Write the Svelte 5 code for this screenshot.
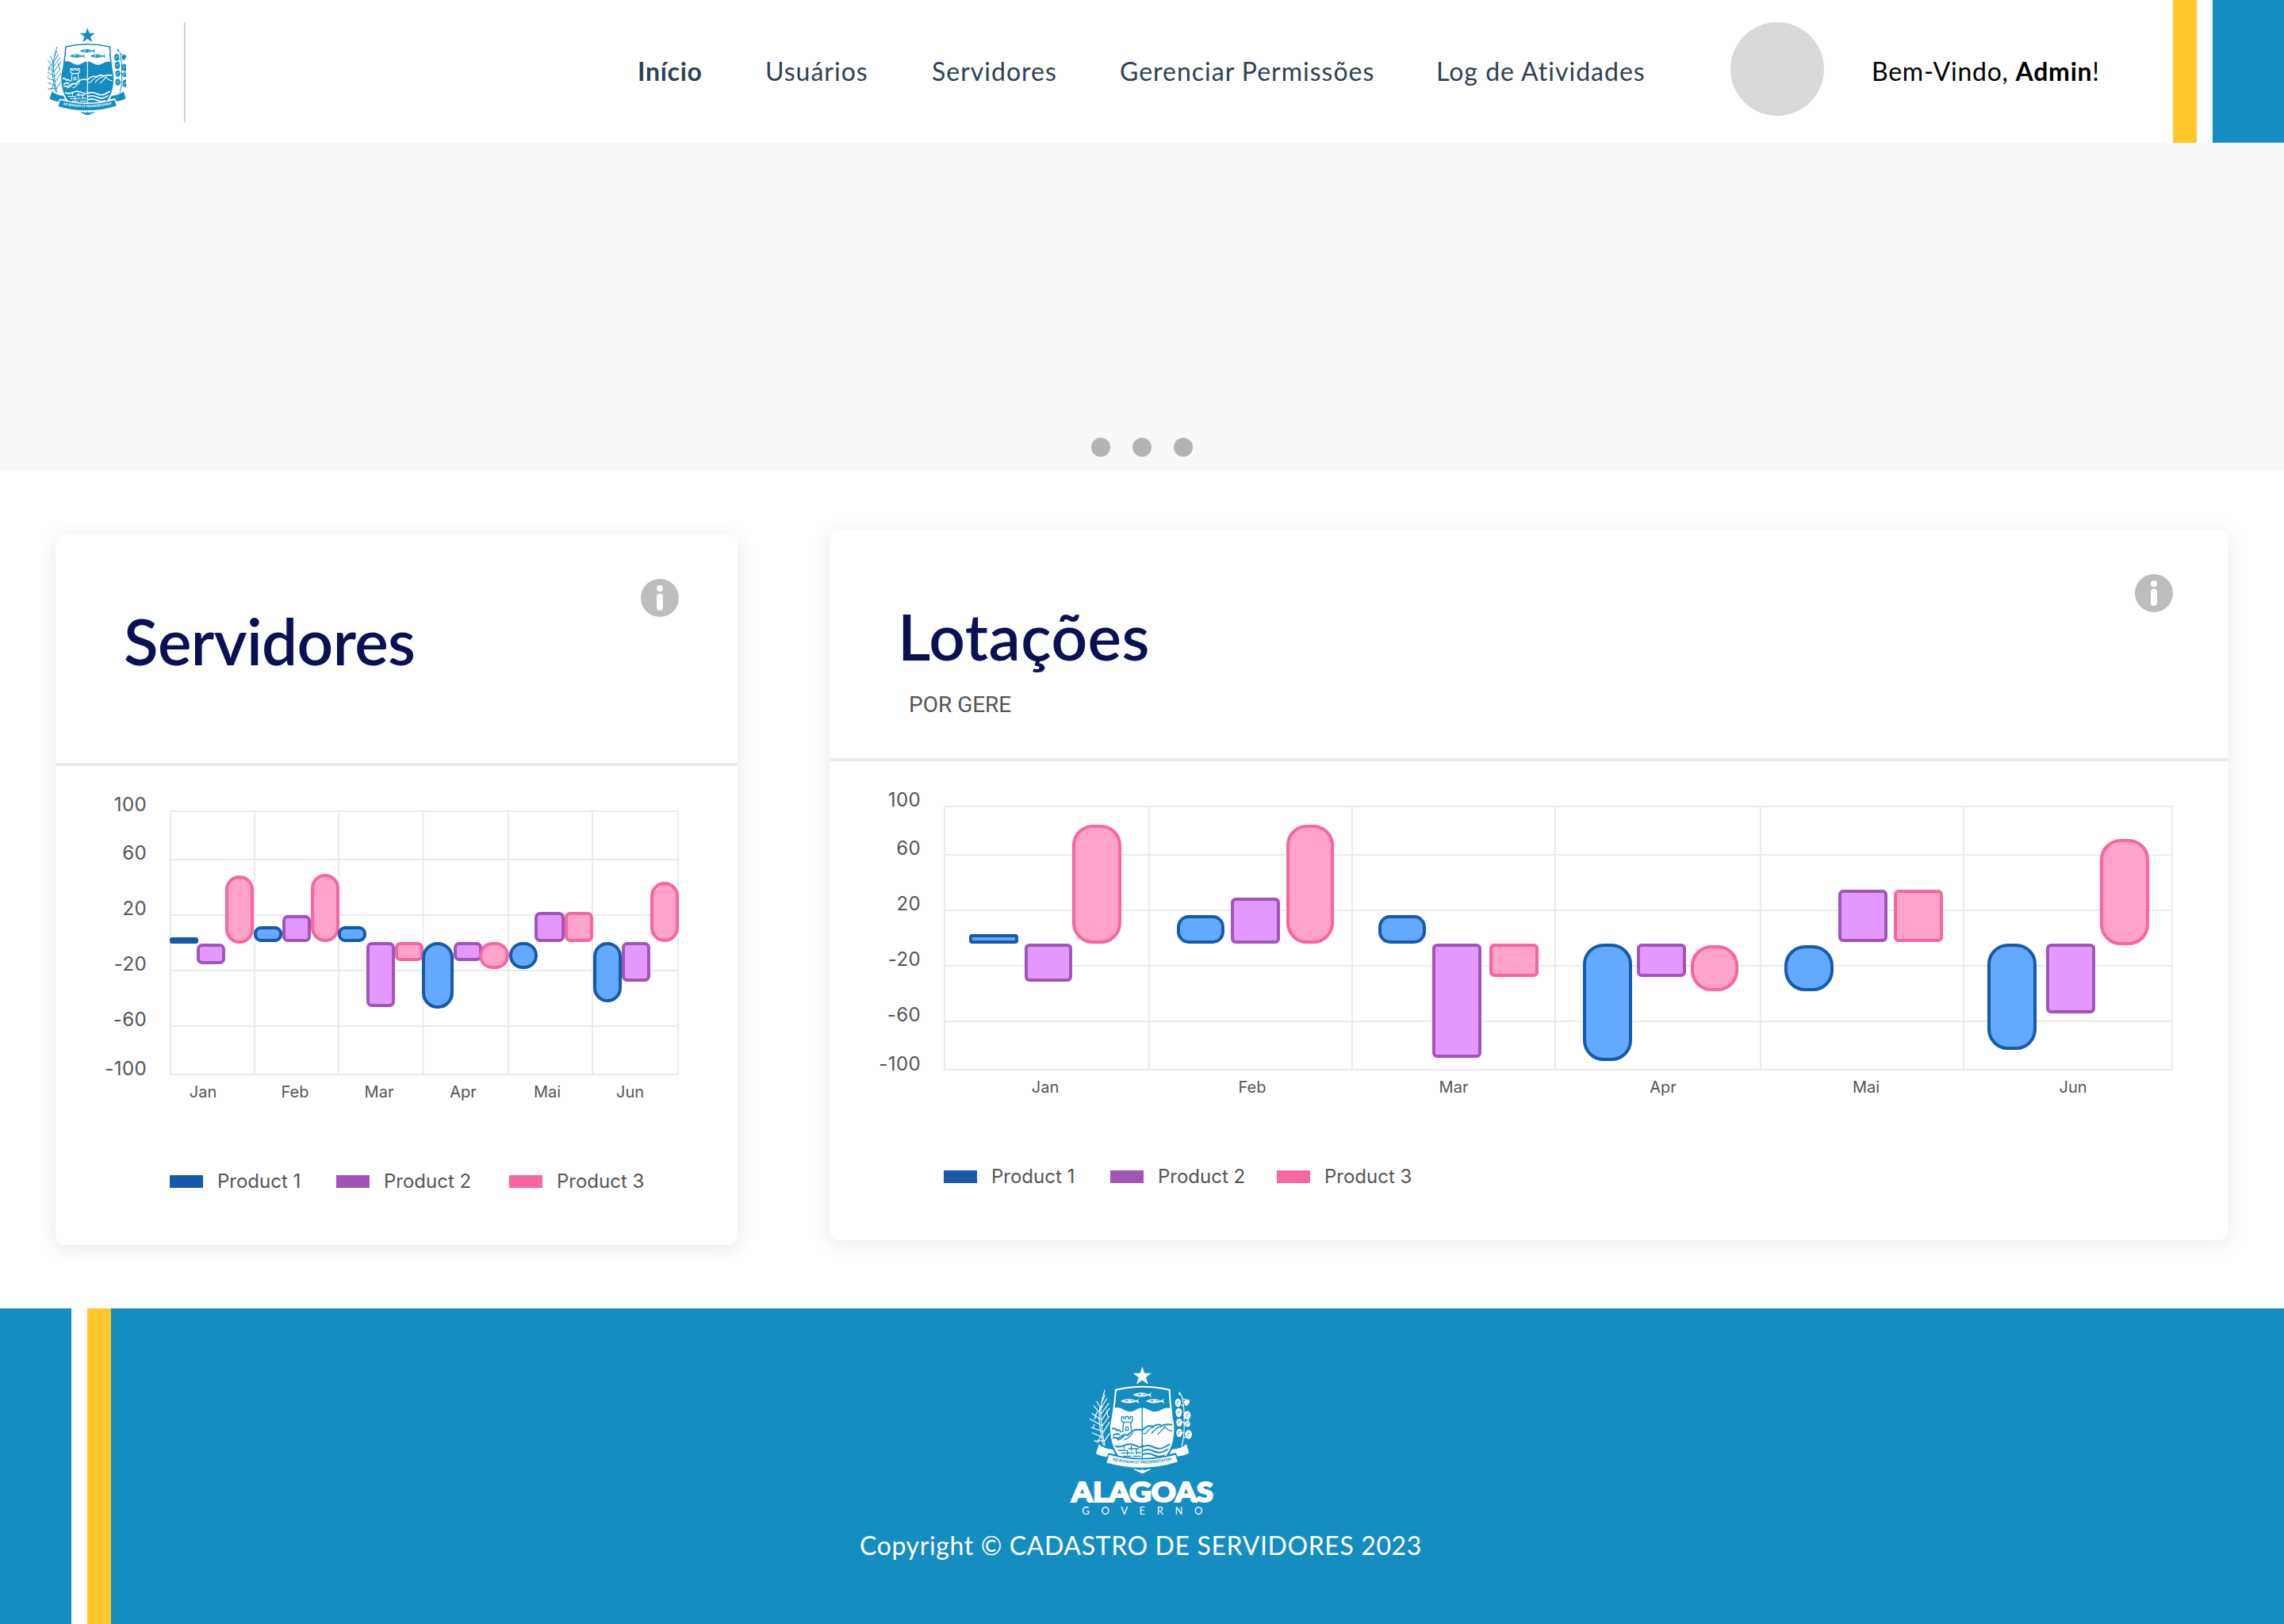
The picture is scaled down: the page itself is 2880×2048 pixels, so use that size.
<script>
  const links = ['Início', 'Usuários', 'Servidores', 'Gerenciar Permissões', 'Log de Atividades'];
  const legend = ['Product 1', 'Product 2', 'Product 3'];

  // Grid rows shared by both charts: [line offset, axis label]
  const rows = [
    [57, '100'],
    [118, '60'],
    [188, '20'],
    [258, '-20'],
    [328, '-60'],
    [389, '-100']
  ];

  // bars: [series, x, y, width, height, radius]
  const cards = [
    {
      id: 'servidores',
      title: 'Servidores',
      subtitle: '',
      width: 860,
      columns: [145, 251, 357, 463.5, 571, 677, 785],
      months: [['Jan', 186], ['Feb', 302], ['Mar', 408], ['Apr', 514], ['Mai', 620], ['Jun', 724.5]],
      bars: [
        [1, 144, 216, 36, 8, 3], [2, 178, 224, 36, 26, 7], [3, 214, 138, 36, 86, 18],
        [1, 250, 202, 36, 20, 9], [2, 286, 188, 36, 34, 7], [3, 322, 136, 36, 86, 18],
        [1, 356, 202, 36, 20, 9], [2, 392, 222, 36, 82, 7], [3, 428, 222, 36, 24, 7],
        [1, 462, 222, 40, 84, 20], [2, 502, 222, 36, 24, 7], [3, 534, 222, 38, 34, 17],
        [1, 572, 222, 36, 34, 17], [2, 604, 184, 38, 38, 7], [3, 642, 184, 36, 38, 7],
        [1, 678, 222, 36, 76, 18], [2, 714, 222, 36, 50, 7], [3, 750, 146, 36, 76, 18]
      ]
    },
    {
      id: 'lotacoes',
      title: 'Lotações',
      subtitle: 'POR GERE',
      width: 1764,
      columns: [145, 403, 659, 915, 1174, 1430, 1693],
      months: [['Jan', 272], ['Feb', 533], ['Mar', 787], ['Apr', 1051], ['Mai', 1307], ['Jun', 1568]],
      bars: [
        [1, 176, 218, 62, 12, 4], [2, 246, 230, 60, 48, 6], [3, 306, 80, 62, 150, 26],
        [1, 438, 194, 60, 36, 15], [2, 506, 172, 62, 58, 6], [3, 576, 80, 60, 150, 26],
        [1, 692, 194, 60, 36, 15], [2, 760, 230, 62, 144, 6], [3, 832, 230, 62, 42, 6],
        [1, 950, 230, 62, 148, 26], [2, 1018, 230, 62, 42, 6], [3, 1086, 232, 60, 58, 26],
        [1, 1204, 232, 62, 58, 26], [2, 1272, 162, 62, 66, 6], [3, 1342, 162, 62, 66, 6],
        [1, 1460, 230, 62, 134, 26], [2, 1534, 230, 62, 88, 6], [3, 1602, 98, 62, 134, 26]
      ]
    }
  ];
</script>

{#snippet crest(key)}
  <defs>
    <clipPath id="shield-{key}">
      <path d="M231 128 Q331 104 434 128 Q438 210 448 262 Q452 345 405 392 Q372 425 331 441 Q290 425 257 392 Q210 345 213 262 Q224 210 231 128Z" />
    </clipPath>
    <path id="motto-{key}" d="M218 395 Q331 421 446 393" />
  </defs>
  <polygon class="ink" points="331,40 339.500,65 366,65 345,81 353,107 331,91.500 309,107 317,81 296,65 322.500,65" />
  <g clip-path="url(#shield-{key})">
    <path class="ink" d="M205 203 Q240 187 262 204 Q286 218 306 204 Q331 188 356 204 Q380 218 402 204 Q424 190 455 203 V450 H205Z" />
    <!-- tower -->
    <path class="cut-line" d="M253 229 V245 L260 251 L257 288 M294 229 V245 L287 251 L290 283 M253 229 H260 V236 H268 V229 H278 V236 H286 V229 H294 M259 251 H288" />
    <path class="cut-line" d="M268 281 V271 Q273 265 278 271 V281Z" />
    <!-- hills and crests -->
    <path class="cut-line bold" d="M208 278 Q226 268 235 282 Q244 276 251 289 M220 302 Q232 290 246 298 M208 312 Q230 306 240 313 Q262 292 276 300 Q300 270 331 281 Q352 258 372 267 Q392 254 405 264 Q422 254 452 262" />
    <path class="cut-line" d="M264 300 Q250 318 236 318 M334 293 H345 Q362 268 374 270 M366 294 Q384 268 404 267 M388 297 Q408 280 416 267 Q424 282 450 286 M262 318 Q280 312 296 290" />
    <!-- lagoon pattern -->
    <path class="cut-line bold" d="M205 326 Q232 352 258 340 T308 340 T331 334" />
    <path class="cut-line" d="M240 357 H272 M278 351 H318 M250 367 H300 M306 366 H326 M260 379 H290 M296 379 H326 M262 340 V352 M290 340 V358 M275 357 V374 M308 352 V372" />
    <path class="cut-line bold" d="M331 344 Q352 334 374 345 T414 345 T456 330 M331 359 Q352 349 374 360 T414 360 T450 348 M331 374 Q352 364 374 375 T420 374" />
    <path class="cut-line" d="M331 192 V445" />
  </g>
  <path class="ink-line shield" d="M231 128 Q331 104 434 128 Q438 210 448 262 Q452 345 405 392 Q372 425 331 441 Q290 425 257 392 Q210 345 213 262 Q224 210 231 128Z" />
  <path class="cut" d="M250 400 Q331 442 412 400 L400 424 Q331 440 262 424Z" />
  <path class="ink-line" d="M300 428 Q316 434 331 442 Q346 434 362 428 M331 426 V440" />
  <!-- fish -->
  {#each [[331, 146], [284, 170], [379, 170]] as [x, y]}
    <g transform="translate({x} {y})">
      <path class="ink" d="M-36 1 Q-18 -10 8 -6 L24 -1 L35 -8 L31 0 L36 10 L24 3 Q0 12 -22 6Z" />
      <path class="cut-line thin" d="M-20 0 H-4 M2 0 H16 M-14 4 L-8 -5" />
    </g>
  {/each}
  <!-- sugar cane -->
  <path class="ink-line plant" d="M190 128 Q168 190 176 250 Q180 300 190 340 M184 338 Q160 240 172 190 M170 215 L147 188 M172 205 L197 160 M173 222 L205 178 M172 240 L140 217 M175 245 L208 197 M176 262 L132 238 M177 268 L206 228 M180 285 L137 270 M181 292 L207 250 M183 308 L140 290 M186 320 L148 322 M188 322 L207 292 M172 195 L158 170 M176 180 L190 146 M160 210 L150 240 M196 206 L202 232 M150 258 L144 276 M176 300 L160 330" />
  <!-- cotton branch -->
  <path class="ink-line plant" d="M470 136 L481 152 Q492 200 489 250 Q492 300 480 342 M486 190 L470 178 M488 215 L505 222 M489 250 L470 252 M489 260 L508 240 M490 290 L470 292 M489 310 L508 298 M484 162 L508 168 L498 188" />
  {#each [[466, 177, 11, 16], [469, 214, 12, 17], [501, 224, 13, 16], [471, 252, 11, 15], [502, 257, 10, 11], [471, 291, 11, 16], [506, 297, 13, 17]] as [x, y, rx, ry]}
    <ellipse class="ink" cx={x} cy={y} {rx} {ry} />
    <path class="cut-line thin" d="M{x - 5} {y + 6} Q{x - 2} {y - 8} {x + 5} {y - 5}" />
  {/each}
  <path class="ink" d="M488 170 L504 166 L511 174 L500 190 L492 186Z M472 138 L478 150 L468 146Z" />
  <!-- ribbon -->
  <path class="ink" d="M167 334 Q186 352 220 354 L228 372 L204 368 L199 382 Q174 380 156 369Z M498 334 Q478 352 442 354 L434 372 L458 366 L463 380 Q490 378 508 367Z" />
  <path class="ink outlined" d="M204 371 Q331 407 458 371 L468 402 Q331 446 193 405Z" />
  <text class="motto"><textPath href="#motto-{key}" textLength="226">AD BONUM ET PROSPERITATEM</textPath></text>
{/snippet}

<div class="page">
  <header class="topbar">
    <svg class="crest" viewBox="147 40 362 403" aria-label="Alagoas">{@render crest('top')}</svg>
    <span class="rule"></span>
    <nav>
      {#each links as link, i}
        <a class:active={i === 0}>{link}</a>
      {/each}
    </nav>
    <span class="avatar"></span>
    <p class="welcome">Bem-Vindo, <b>Admin</b>!</p>
    <span class="stripe yellow"></span>
    <span class="stripe blue"></span>
  </header>

  <section class="banner">
    <i></i><i></i><i></i>
  </section>

  <main>
    {#each cards as card}
      <article class="card {card.id}">
        <div class="card-head">
          <div>
            <h2>{card.title}</h2>
            {#if card.subtitle}<p>{card.subtitle}</p>{/if}
          </div>
          <svg class="info" viewBox="0 0 48 48">
            <circle cx="24" cy="24" r="24" fill="#bdbdbd" />
            <circle cx="24" cy="12" r="4" fill="#fff" />
            <rect x="20" y="18.500" width="8" height="21.500" rx="4" fill="#fff" />
          </svg>
        </div>
        <svg class="chart" width={card.width} height="504">
          {#each rows as [y, label]}
            <line x1={card.columns[0] - 1} x2={card.columns[6] + 1} y1={y} y2={y} />
            <text class="tick" x="115" y={label === '-100' ? y + 1 : y - 0.5}>{label}</text>
          {/each}
          {#each card.columns as x}
            <line x1={x} x2={x} y1="56" y2="390" />
          {/each}
          {#each card.bars as [series, x, y, w, h, r]}
            <rect class="s{series}" x={x + 2} y={y + 2} width={w - 4} height={h - 4} rx={Math.max(r - 2, 1)} />
          {/each}
          {#each card.months as [month, x]}
            <text class="month" {x} y="418">{month}</text>
          {/each}
        </svg>
        <ul class="legend">
          {#each legend as name, i}
            <li><span class="swatch c{i + 1}"></span><span class="name">{name}</span></li>
          {/each}
        </ul>
      </article>
    {/each}
  </main>

  <footer>
    <span class="stripe blue"></span>
    <span class="stripe yellow"></span>
    <div class="foot">
      <svg class="brand" viewBox="0 0 660 630" aria-label="Alagoas Governo">
        {@render crest('foot')}
        <text class="alagoas" x="63" y="553" textLength="537" lengthAdjust="spacingAndGlyphs">ALAGOAS</text>
        <text class="governo" x="103" y="599" textLength="456">GOVERNO</text>
      </svg>
      <p>Copyright © CADASTRO DE SERVIDORES 2023</p>
    </div>
  </footer>
</div>

<style>
  :global(body) {
    margin: 0;
    background: #fff;
  }
  .page {
    width: 2880px;
    height: 2048px;
    display: flex;
    flex-direction: column;
    overflow: hidden;
    font-family: Lato, 'Open Sans', sans-serif;
    --blue: #148dc1;
    --yellow: #ffc72c;
  }
  p, h2, ul {
    margin: 0;
    padding: 0;
  }

  .topbar {
    flex: none;
    height: 180px;
    display: flex;
    align-items: center;
    font-size: 32px;
    line-height: 38.4px;
    white-space: nowrap;
  }
  .topbar .crest {
    width: 99px;
    height: 110px;
    margin-left: 60px;
    --ink: var(--blue);
    --cut: #fff;
  }
  .rule {
    width: 2px;
    height: 126px;
    margin: 2px 0 0 73px;
    background: #cbd5e1;
  }
  nav {
    display: grid;
    grid-template-columns: 161px 210px 237px 399px 370px;
    margin: 1px 0 0 570px;
    color: #2e4159;
    letter-spacing: 1px;
  }
  nav .active {
    font-weight: 700;
    letter-spacing: 0.7px;
  }
  .avatar {
    flex: none;
    width: 118px;
    height: 118px;
    margin: 0 0 6px 1px;
    border-radius: 50%;
    background: #d9d9d9;
  }
  .welcome {
    flex: 1;
    padding: 1px 0 0 60px;
    color: #000;
    letter-spacing: 0.75px;
  }
  .stripe {
    flex: none;
    align-self: stretch;
  }
  .stripe.yellow {
    width: 30px;
    margin-right: 20px;
    background: var(--yellow);
  }
  .stripe.blue {
    width: 90px;
    background: var(--blue);
  }

  .banner {
    flex: none;
    height: 413px;
    box-sizing: border-box;
    padding-bottom: 17px;
    display: flex;
    justify-content: center;
    align-items: flex-end;
    gap: 28px;
    background: #f8f8f8;
  }
  .banner i {
    width: 24px;
    height: 24px;
    border-radius: 50%;
    background: #b4b4b4;
  }

  main {
    flex: none;
    height: 1057px;
    box-sizing: border-box;
    padding: 75px 70px 0;
    display: flex;
    align-items: flex-start;
    justify-content: space-between;
  }
  .card {
    height: 896px;
    border-radius: 12px;
    background: #fff;
    box-shadow: 0 4px 24px rgba(0, 0, 0, 0.09);
  }
  .servidores {
    width: 860px;
    margin-top: 6px;
  }
  .lotacoes {
    width: 1764px;
  }
  .card-head {
    height: 288px;
    box-sizing: content-box;
    border-bottom: 4px solid #ebebeb;
    display: flex;
    justify-content: space-between;
    padding-left: 86px;
    padding-right: 70px;
  }
  .servidores .card-head {
    padding-right: 74px;
  }
  h2 {
    margin-top: 86px;
    font-size: 80px;
    line-height: 96px;
    font-weight: 600;
    letter-spacing: 0.5px;
    color: #0a1054;
  }
  .servidores h2 {
    letter-spacing: -0.6px;
  }
  .card-head p {
    margin: 21.600px 0 0 14px;
    font: 28px/34px Roboto, sans-serif;
    color: #555;
  }
  .info {
    width: 48px;
    height: 48px;
    margin-top: 56px;
  }
  .chart {
    display: block;
    font-family: Inter, sans-serif;
  }
  .chart line {
    stroke: #ebebeb;
    stroke-width: 2;
  }
  .chart text {
    fill: #555;
  }
  .tick {
    font-size: 24px;
    letter-spacing: 0.4px;
    text-anchor: end;
  }
  .month {
    font-size: 20px;
    text-anchor: middle;
  }
  .chart rect {
    stroke-width: 4;
  }
  .s1 {
    fill: #63a9ff;
    stroke: #175aaa;
  }
  .s2 {
    fill: #e497ff;
    stroke: #a155b9;
  }
  .s3 {
    fill: #ffa3cb;
    stroke: #f765a3;
  }
  .legend {
    display: grid;
    grid-template-columns: 210px 210px auto;
    justify-content: start;
    padding-left: 144px;
    list-style: none;
    font: 24px/40px Inter, sans-serif;
    color: #555;
  }
  .servidores .legend {
    grid-template-columns: 210px 218px auto;
  }
  .legend li {
    display: flex;
    align-items: center;
    gap: 18px;
    height: 40px;
  }
  .swatch {
    width: 42px;
    height: 16px;
  }
  .c1 {
    background: #175aaa;
  }
  .c2 {
    background: #a155b9;
  }
  .c3 {
    background: #f765a3;
  }

  footer {
    flex: 1;
    display: flex;
    background: var(--blue);
  }
  footer .stripe.blue {
    border-right: 20px solid #fff;
  }
  footer .stripe.yellow {
    margin: 0;
  }
  .foot {
    flex: 1;
    padding: 60px 140px 0 0;
    display: flex;
    flex-direction: column;
    align-items: center;
    color: #fff;
    --ink: #fff;
    --cut: var(--blue);
  }
  .brand {
    width: 220px;
    height: 210px;
  }
  .foot p {
    margin: 9.500px 3px 0 0;
    font-size: 32px;
    line-height: 38.4px;
    letter-spacing: 0.62px;
    white-space: nowrap;
  }

  .ink {
    fill: var(--ink);
  }
  .cut {
    fill: var(--cut);
  }
  .ink-line {
    fill: none;
    stroke: var(--ink);
    stroke-width: 4;
  }
  .cut-line {
    fill: none;
    stroke: var(--cut);
    stroke-width: 4;
  }
  .cut-line.bold {
    stroke-width: 6;
  }
  .cut-line.thin {
    stroke-width: 2.4;
  }
  .ink-line.plant {
    stroke-width: 3.4;
  }
  .ink-line.shield {
    stroke-width: 6;
  }
  .outlined {
    stroke: var(--cut);
    stroke-width: 5;
  }
  .motto {
    font-size: 15px;
    font-weight: 900;
    fill: var(--cut);
  }
  .alagoas {
    font-size: 105px;
    font-weight: 900;
    fill: #fff;
    stroke: #fff;
    stroke-width: 6;
  }
  .governo {
    font-size: 39px;
    fill: #fff;
  }
</style>
